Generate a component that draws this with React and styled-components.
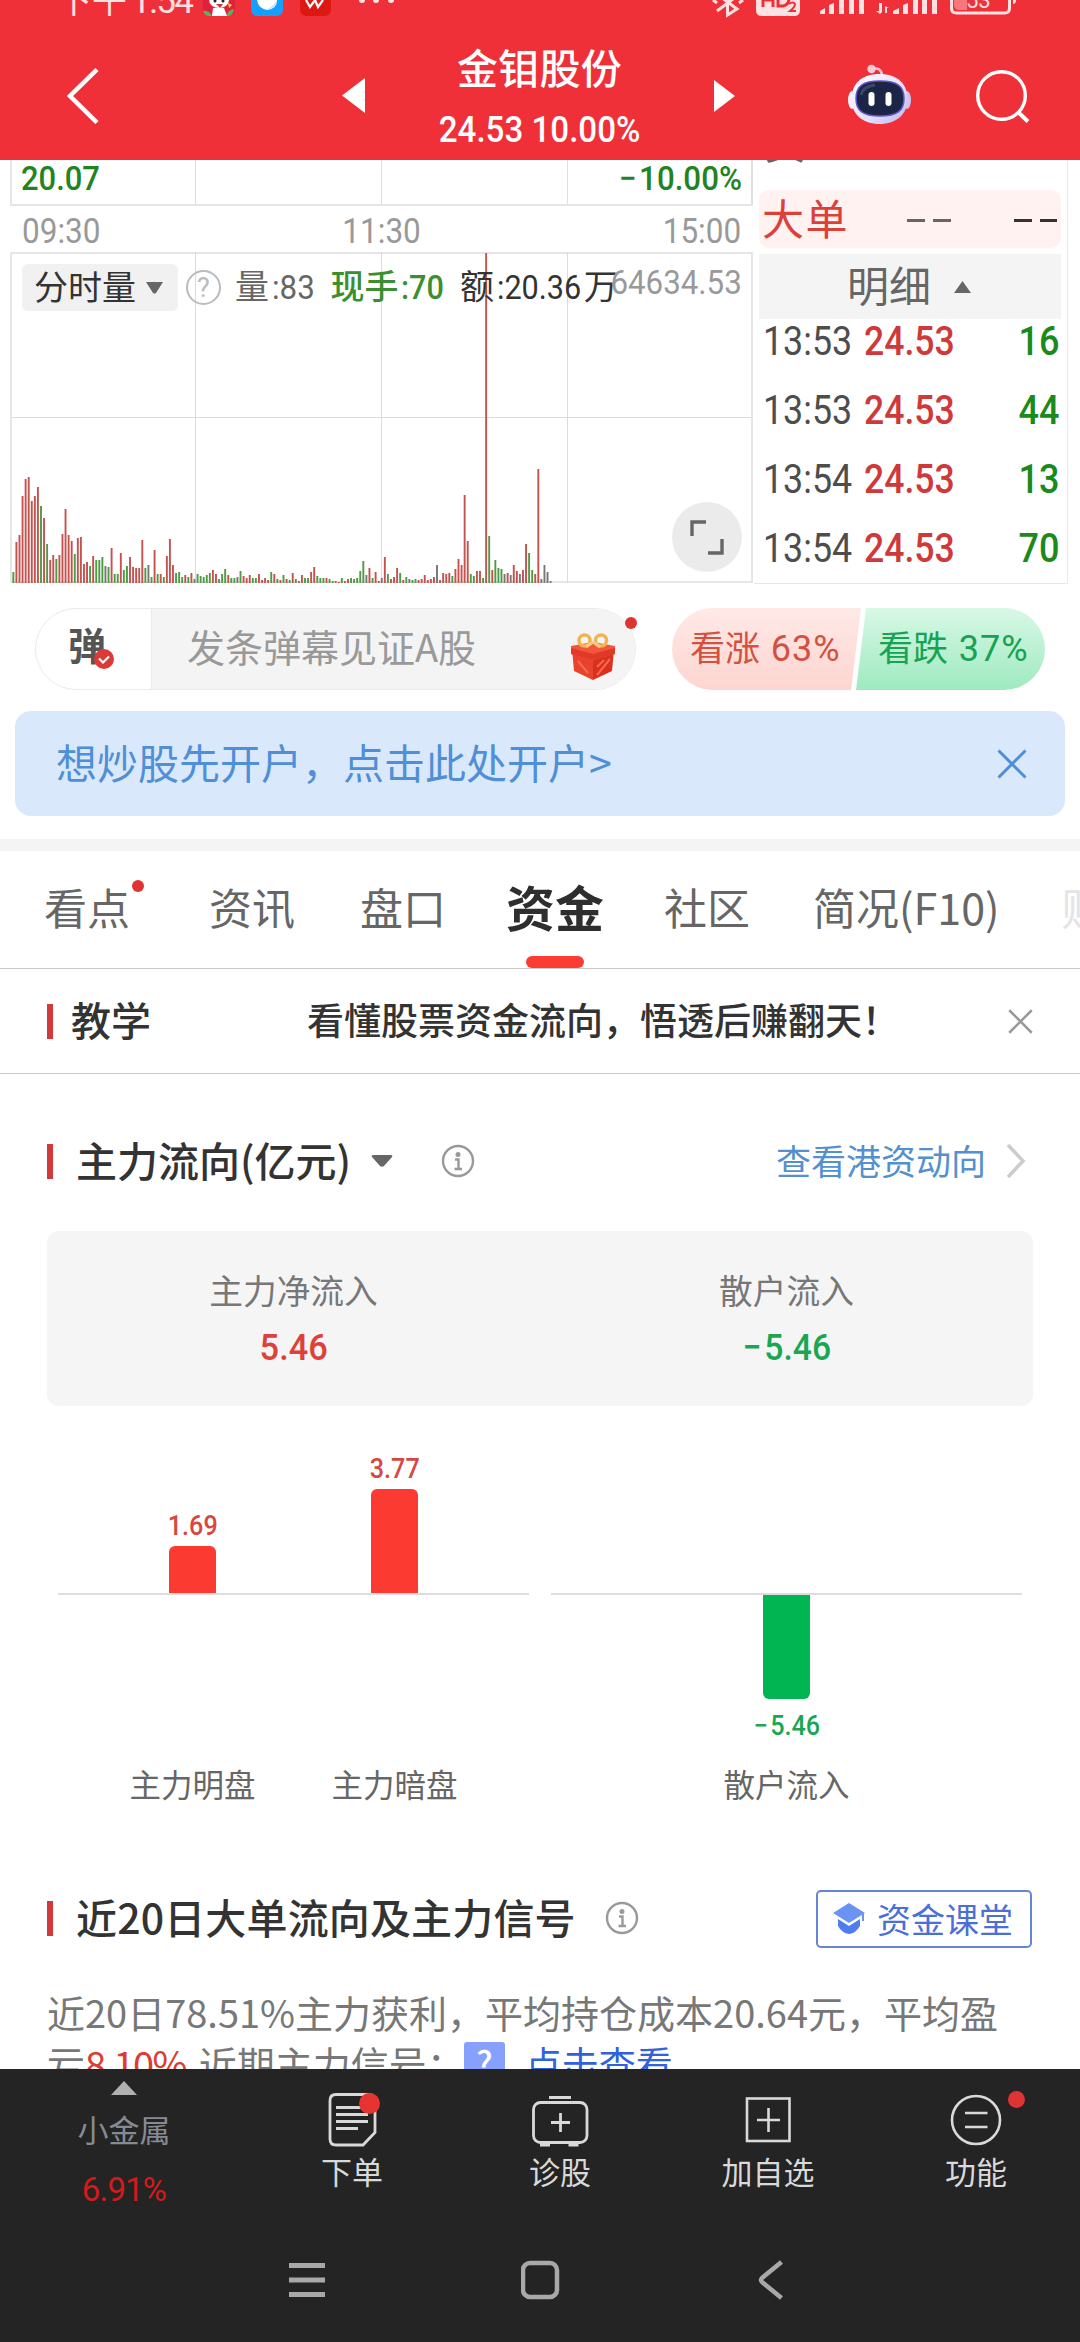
import React from 'react';
import styled, { createGlobalStyle } from 'styled-components';

const VOLUME =
  'g11 r41 r48 r87 r104 r106 r82 r87 r96 g77 r65 g39 r23 r28 g24 r28 r49 r74 r48 r42 g29 r45 r46 r19 r21 g17 r27 g23 g23 g26 k17 g16 r35 g9 g9 r30 g13 g17 r26 r16 ' +
  'r15 r15 r43 g15 k18 g6 r33 g9 r9 g6 r27 r44 r18 g10 g11 g6 r8 g6 r10 k4 g9 g7 g6 g8 g10 r13 r9 g4 g9 g14 r8 g5 g5 k6 g12 r7 r5 r8 g5 g5 ' +
  'r9 r3 r5 r3 g11 r9 g4 r3 g8 r4 g3 r10 g4 r2 r8 g5 g5 r11 r16 g7 g5 g5 r5 g4 g2 r2 r1 g5 r2 r4 g5 g4 g5 g12 g22 k8 r15 g5 r11 r2 ' +
  'k5 r26 g9 r4 r6 r15 g10 r3 g6 k4 g3 g4 r3 r4 r8 r3 r4 r6 k18 r3 r10 r9 r10 g7 r14 r24 r18 r88 r42 g9 g7 r12 r12 g5 r330 g47 r13 g23 g15 g14 ' +
  'k9 r10 k8 r18 r12 k9 r13 r39 g30 g13 r9 r114 k4 k18 k11 k2';

const volumeBars = VOLUME.split(' ').map((item) => ({
  kind: item[0],
  size: Number(item.slice(1))
}));

const barColors = { r: '#c4524f', g: '#4f9a45', k: '#777777' };

const trades = [
  { time: '13:53', price: '24.53', amount: '16' },
  { time: '13:53', price: '24.53', amount: '44' },
  { time: '13:54', price: '24.53', amount: '13' },
  { time: '13:54', price: '24.53', amount: '70' }
];

const tabs = [
  { name: '看点', left: 44, dot: true },
  { name: '资讯', left: 79 },
  { name: '盘口', left: 65 },
  { name: '资金', left: 60, active: true },
  { name: '社区', left: 60 },
  { name: '简况(F10)', left: 63 },
  { name: '财', left: 62, faded: true }
];

const StatusIcons = () => (
  <svg width='200' height='20' viewBox='202 0 200 20'>
    <path d='M202.500 0h32.500v9q0 7-7 7h-18.500q-7 0-7-7z' fill='#e0203c' />
    <path d='M203 11q6-1 9 5h-4q-4-1-5-5zM234 9q-6 1-8 7h3q4-1 5-7z' fill='#5fae62' />
    <ellipse cx='219' cy='0' rx='10' ry='8' fill='#fff' />
    <path d='M213 8h11l3 8h-15z' fill='#fff' />
    <circle cx='215' cy='1' r='1.500' fill='#222' />
    <circle cx='223' cy='1' r='1.500' fill='#222' />
    <path d='M216 4h7l-3 4z' fill='#c33' />
    <path d='M228 3l4 2-3 3z' fill='#ffd84a' />
    <path d='M251 0h32v9q0 7-7 7h-18q-7 0-7-7z' fill='#14a0ff' />
    <path d='M257 0h20q0 9-10 10q-9-2-10-10z' fill='#fff' />
    <path d='M266 10q10-1 11-10q-3 6-11 10z' fill='#bfe4fb' />
    <path d='M300 0h31v9q0 7-7 7h-17q-7 0-7-7z' fill='#dd1712' />
    <path d='M306 0l4 7l5-7l3 7l5-7' fill='none' stroke='#fff' strokeWidth='2.200' />
    <circle cx='362' cy='0' r='3' fill='#ffe3e3' />
    <circle cx='376' cy='0' r='3' fill='#ffe3e3' />
    <circle cx='391' cy='0' r='3' fill='#ffe3e3' />
  </svg>
);

const SignalIcons = () => (
  <svg width='310' height='20' viewBox='710 0 310 20'>
    <g fill='none' stroke='#ffe1e2' strokeWidth='3'>
      <path d='M717 11L737-4M717-6L737 9L727.500 15V-4' />
      <path d='M713 0l4 3M743 0l-4 3' />
    </g>
    <path d='M756 0h44v10q0 6-6 6h-32q-6 0-6-6z' fill='#ffe1e2' />
    <g fill='none' stroke='#ee3038' strokeWidth='3'>
      <path d='M763-6V7M773-6V7M763 0h10M778-6V6h5q6-1 6-8' />
    </g>
    <path d='M789 4q4-3 6 0q0 3-5 7h6' fill='none' stroke='#ee3038' strokeWidth='2' />
    <g fill='#ffe1e2'>
      <path d='M820 14v-3l5-3v6zM829 14v-9l5-2v11zM839 0h5v14h-5zM849 0h5v14h-5zM859 0h5v14h-5z' />
      <path d='M893 14v-3l6-3v6zM903 14v-9l5-2v11zM913 0h5v14h-5zM922 0h5v14h-5zM932 0h5v14h-5z' />
      <path d='M879 3v8h-3l4 3 2-2V3zM885 13V6l4 2h-2v5z' />
      <path d='M1013 0h3q0 4-3 4z' />
      <path d='M954 0h13v10h-9q-4-1-4-5z' opacity='.4' />
    </g>
    <path d='M951.500-4V8q0 5 5 5h48q5 0 5-5V-4' fill='none' stroke='#ffe1e2' strokeWidth='3' />
    <text x='966' y='8' fontSize='22' fontFamily='Roboto, sans-serif' fill='#ffe1e2'>
      53
    </text>
  </svg>
);

const Robot = () => (
  <svg width='64' height='62' viewBox='0 0 64 62'>
    <defs>
      <linearGradient id='shell' x1='0' y1='0' x2='1' y2='1'>
        <stop offset='0' stopColor='#ffffff' />
        <stop offset='.6' stopColor='#e6defa' />
        <stop offset='1' stopColor='#b9b4f0' />
      </linearGradient>
    </defs>
    <path d='M25 5q8-2 9 6' fill='none' stroke='#f9c3d4' strokeWidth='2.500' />
    <circle cx='23.500' cy='5' r='4.200' fill='#fbc8d4' />
    <ellipse cx='4' cy='36' rx='4' ry='9' fill='#f2eefc' />
    <ellipse cx='59' cy='36' rx='4' ry='9' fill='#c9c4f2' />
    <path d='M31.500 10c18 0 28 10 28 25S48.500 60 31.500 60S3.500 50 3.500 35S13.500 10 31.500 10z' fill='url(#shell)' />
    <path d='M32 17c17 0 24 5 24 17.500s-7 17.500-24 17.500S8 47 8 34.500s7-17.500 24-17.500z' fill='#1d2547' stroke='#5d55c8' strokeWidth='1.500' />
    <path d='M13 31q2-9 14-10' stroke='#3d4668' strokeWidth='3' fill='none' />
    <rect x='20.500' y='28' width='6' height='14' rx='3' fill='#fff' />
    <rect x='37.500' y='28' width='6' height='14' rx='3' fill='#fff' />
  </svg>
);

const VolumeChart = () => (
  <ChartSvg width='744' height='332' viewBox='10 252 744 332'>
    <g fill='#e6e6e6'>
      <rect x='10' y='252' width='743' height='2' />
      <rect x='10' y='417' width='743' height='1' fill='#dcdcdc' />
      <rect x='10' y='581' width='743' height='2' />
      <rect x='10' y='252' width='2' height='331' />
      <rect x='195' y='252' width='1' height='331' fill='#dcdcdc' />
      <rect x='381' y='252' width='1' height='331' fill='#dcdcdc' />
      <rect x='567' y='252' width='1' height='331' fill='#dcdcdc' />
      <rect x='751' y='252' width='2' height='331' />
    </g>
    {volumeBars.map((bar, i) => (
      <rect
        key={i}
        x={12.4 + i * 3.07}
        y={583 - bar.size}
        width='1.900'
        height={bar.size}
        fill={barColors[bar.kind]}
      />
    ))}
  </ChartSvg>
);

const Gift = () => (
  <svg width='46' height='48' viewBox='0 0 46 48'>
    <path d='M2 16L23 21V47L4 38z' fill='#e8432f' />
    <path d='M44 16L23 21V47L42 38z' fill='#d9301f' />
    <path d='M1 13L23 9L45 13V21L23 27L1 21z' fill='#f4553c' />
    <path d='M1 15L23 21L45 15V21L23 27L1 21z' fill='#df3a28' />
    <path d='M27 42L40 26M27 34L34 27M8 28L18 40' stroke='#f7694b' strokeWidth='2' />
    <circle cx='14.500' cy='7.500' r='5.500' fill='none' stroke='#f0b455' strokeWidth='3.500' />
    <circle cx='31' cy='7.500' r='5.500' fill='none' stroke='#f0b455' strokeWidth='3.500' />
    <path d='M23 9l-7 5M23 9l7 5' stroke='#f6cd7c' strokeWidth='3' />
  </svg>
);

const Info = () => (
  <svg width='34' height='34' viewBox='0 0 34 34' fill='none' stroke='#999'>
    <circle cx='17' cy='17' r='15' strokeWidth='2.400' />
    <circle cx='17' cy='10.500' r='2.500' fill='#999' stroke='none' />
    <path d='M14 15.500h3.500v9M13.500 25h7.500' strokeWidth='2.400' />
  </svg>
);

const Cross = ({ size, color, stroke }) => (
  <svg width={size} height={size} viewBox='0 0 30 30'>
    <path d='M1.500 1.500L28.500 28.500M28.500 1.500L1.500 28.500' stroke={color} strokeWidth={stroke} />
  </svg>
);

const OrderIcon = () => (
  <svg width='60' height='60' viewBox='322 2090 60 60' fill='none' stroke='#d9d9d9' strokeWidth='2.800'>
    <path d='M336 2094.500h32q7 0 7 7v31l-12 12.500h-27q-6 0-6-6v-38.500q0-6 6-6z' />
    <path d='M336 2107.500h32M336 2114.500h32M336 2121.500h32M336 2128.500h22' />
    <circle cx='369.500' cy='2103.500' r='10.500' fill='#e83333' stroke='none' />
  </svg>
);

const DiagnoseIcon = () => (
  <svg width='60' height='60' viewBox='530 2090 60 60' fill='none' stroke='#d9d9d9' strokeWidth='2.800'>
    <rect x='533.500' y='2102.500' width='53.500' height='40' rx='7' />
    <path d='M549 2097.500h22M540 2145h10M568.500 2145h10M551 2122.500h19M560.500 2113v19' />
  </svg>
);

const AddIcon = () => (
  <svg width='60' height='60' viewBox='738 2090 60 60' fill='none' stroke='#d9d9d9' strokeWidth='2.600'>
    <rect x='747' y='2098.500' width='42.500' height='42.500' />
    <path d='M757 2120h23M768.500 2108v24' />
  </svg>
);

const MoreIcon = () => (
  <svg width='60' height='60' viewBox='946 2090 60 60' fill='none' stroke='#d9d9d9' strokeWidth='2.600'>
    <circle cx='976' cy='2120' r='24' />
    <path d='M965 2113h22.500M965 2127h22.500' />
  </svg>
);

const App = () => {
  return (
    <Screen>
      <GlobalStyle />
      <Header>
        <StatusBar>
          <Clock>
            下午<ClockTime>1:54</ClockTime>
          </Clock>
          <StatusIcons />
          <SignalIcons />
        </StatusBar>
        <TopBar>
          <BackCell>
            <svg width='32' height='56' viewBox='0 0 32 56'>
              <path d='M30 1.500L3 28L30 54.500' fill='none' stroke='#fff' strokeWidth='4.500' />
            </svg>
          </BackCell>
          <svg width='23' height='35' viewBox='0 0 23 35'>
            <path d='M0 17.500L23 0V35z' fill='#fff' />
          </svg>
          <StockTitle>
            <StockName>金钼股份</StockName>
            <Num $size={36} $line={56} $color='#fff' $origin='center' $weight={500} $scale={0.92}>
              24.53 10.00%
            </Num>
          </StockTitle>
          <svg width='21' height='32' viewBox='0 0 21 32'>
            <path d='M21 16L0 0V32z' fill='#fff' />
          </svg>
          <RobotCell>
            <Robot />
          </RobotCell>
          <SearchCell>
            <svg width='56' height='56' viewBox='0 0 56 56' fill='none' stroke='#fff' strokeWidth='3.400'>
              <circle cx='25.500' cy='27.500' r='23.800' />
              <path d='M42.500 44.500L52 53.500' strokeWidth='4' />
            </svg>
          </SearchCell>
        </TopBar>
      </Header>

      <Market>
        <Minute>
          <PriceTail>
            <TailCell>
              <Num $size={34} $line={37} $color='#218321' $weight={500} $scale={0.91}>
                20.07
              </Num>
            </TailCell>
            <TailCell />
            <TailCell />
            <TailCell $end>
              <Num $size={34} $line={37} $color='#218321' $origin='right' $weight={500} $scale={0.92}>
                <Minus>−</Minus>10.00%
              </Num>
            </TailCell>
          </PriceTail>
          <Times>
            <Num $size={35} $color='#999'>09:30</Num>
            <Num $size={35} $color='#999' $origin='center'>11:30</Num>
            <Num $size={35} $color='#999' $origin='right'>15:00</Num>
          </Times>
          <VolumePanel>
            <VolumeChart />
            <Legend>
              <Chip>
                分时量
                <svg width='17' height='12' viewBox='0 0 17 12'>
                  <path d='M0 0H17L10 11Q8.500 12 7 11z' fill='#666' />
                </svg>
              </Chip>
              <Help>?</Help>
              <Stat $left={14} $color='#666'>
                量<Num $size={34} $color='inherit' $scale={0.92}>:83</Num>
              </Stat>
              <Stat $left={12} $color='#3b8f2f' $weight={500}>
                现手<Num $size={34} $color='inherit' $weight={500}>:70</Num>
              </Stat>
              <Stat $left={11} $color='#333'>
                额<Num $size={34} $color='inherit'>:20.36</Num>
                <Unit>万</Unit>
              </Stat>
            </Legend>
            <MaxVolume>
              <Num $size={34} $line={41} $color='#999' $origin='right' $scale={0.92}>
                64634.53
              </Num>
            </MaxVolume>
            <Expand>
              <svg width='36' height='36' viewBox='0 0 36 36' fill='none' stroke='#666' strokeWidth='3.400'>
                <path d='M3 17V3H17M19 34H33V20' />
              </svg>
            </Expand>
          </VolumePanel>
        </Minute>
        <Quotes>
          <CutRow>
            <span>卖</span>
          </CutRow>
          <BigOrder>
            大单
            <Dashes $color='#666' />
            <Dashes $color='#333' />
          </BigOrder>
          <DetailHead>
            明细
            <svg width='17' height='12' viewBox='0 0 17 12'>
              <path d='M0 12H17L8.500 0z' fill='#666' />
            </svg>
          </DetailHead>
          {trades.map((trade, i) => (
            <TradeRow key={i}>
              <Num $size={40} $color='#4d4d4d' $scale={0.895}>{trade.time}</Num>
              <Num $size={40} $color='#d0393a' $weight={500} $scale={0.89}>{trade.price}</Num>
              <Num $size={40} $color='#1a8a1a' $weight={500} $origin='right'>{trade.amount}</Num>
            </TradeRow>
          ))}
        </Quotes>
      </Market>

      <CommentRow>
        <CommentBox>
          <Toggle>
            弹
            <ToggleMark>
              <svg width='20' height='20' viewBox='0 0 20 20'>
                <circle cx='10' cy='10' r='10' fill='#dc3a36' />
                <path d='M5 9.500l4 4l6-6' fill='none' stroke='#fff' strokeWidth='2.200' />
              </svg>
            </ToggleMark>
          </Toggle>
          <Placeholder>
            <span>发条弹幕见证A股</span>
            <Gift />
          </Placeholder>
          <RedDot $size={12} $top={8} $left={589} />
        </CommentBox>
        <Vote>
          <Bull>
            看涨 <Percent>63%</Percent>
          </Bull>
          <Bear>
            看跌 <Percent>37%</Percent>
          </Bear>
        </Vote>
      </CommentRow>

      <Banner>
        <span>想炒股先开户，点击此处开户&gt;</span>
        <Cross size={30} color='#4f8fd8' stroke={3} />
      </Banner>

      <Tabs>
        {tabs.map((tab) => (
          <Tab key={tab.name} $left={tab.left} $active={tab.active} $faded={tab.faded}>
            {tab.name}
            {tab.dot && <RedDot $size={12} $top={29} $left={88} />}
            {tab.active && <Underline />}
          </Tab>
        ))}
      </Tabs>

      <Lesson>
        <Mark />
        <LessonTag>教学</LessonTag>
        <LessonText>看懂股票资金流向，悟透后赚翻天！</LessonText>
        <Cross size={25} color='#999' stroke={3} />
      </Lesson>

      <SectionHead>
        <Mark />
        <SectionTitle>主力流向(亿元)</SectionTitle>
        <Caret width='22' height='12' viewBox='0 0 22 12'>
          <path d='M2 0H20Q22 .5 21 2L13 11Q11 12.500 9 11L1 2Q0 .5 2 0z' fill='#666' />
        </Caret>
        <Info />
        <MoreLink>
          <span>查看港资动向</span>
          <svg width='20' height='36' viewBox='0 0 20 36'>
            <path d='M2 2L17 18L2 34' fill='none' stroke='#ccc' strokeWidth='3.500' />
          </svg>
        </MoreLink>
      </SectionHead>

      <Summary>
        <SummaryItem>
          主力净流入
          <Num $size={37} $line={40} $color='#df4039' $weight={500} $origin='center' $scale={0.93}>
            5.46
          </Num>
        </SummaryItem>
        <SummaryItem>
          散户流入
          <Num $size={37} $line={40} $color='#1aa653' $weight={500} $origin='center' $scale={0.91}>
            <Minus>−</Minus>5.46
          </Num>
        </SummaryItem>
      </Summary>

      <FlowCharts>
        <FlowChart>
          <FlowColumn>
            <Upper>
              <FlowValue $color='#d8463f'>1.69</FlowValue>
              <Bar $up style={{ height: 47 }} />
            </Upper>
            <Lower />
            <FlowLabel>主力明盘</FlowLabel>
          </FlowColumn>
          <FlowColumn>
            <Upper>
              <FlowValue $color='#d8463f'>3.77</FlowValue>
              <Bar $up style={{ height: 104 }} />
            </Upper>
            <Lower />
            <FlowLabel>主力暗盘</FlowLabel>
          </FlowColumn>
        </FlowChart>
        <FlowChart>
          <FlowColumn>
            <Upper />
            <Lower>
              <Bar style={{ height: 104 }} />
              <FlowValue $color='#1aa653'>
                <Minus>−</Minus>5.46
              </FlowValue>
            </Lower>
            <FlowLabel>散户流入</FlowLabel>
          </FlowColumn>
        </FlowChart>
      </FlowCharts>

      <SignalHead>
        <Mark />
        <SectionTitle $wide>近20日大单流向及主力信号</SectionTitle>
        <InfoGap />
        <Info />
        <ClassButton>
          <svg width='34' height='32' viewBox='0 0 34 32'>
            <path d='M17 0L33 10L17 20L1 10z' fill='#6b93f3' />
            <path d='M6 16L17 23L28 16V23Q24 30 17 31Q10 30 6 23z' fill='#4f7df0' />
            <path d='M31 10V18' stroke='#6b93f3' strokeWidth='2' />
          </svg>
          资金课堂
        </ClassButton>
      </SignalHead>

      <Report>
        近20日78.51%主力获利，平均持仓成本20.64元，平均盈
        <ReportLine>
          亏<Loss>8.10%</Loss>近期主力信号：
          <Question>?</Question>
          <ViewLink>点击查看</ViewLink>
        </ReportLine>
      </Report>

      <BottomBar>
        <Sector>
          <svg width='26' height='14' viewBox='0 0 26 14'>
            <path d='M0 14H26L13 0z' fill='#b0b0b0' />
          </svg>
          <SectorName>小金属</SectorName>
          <SectorRate>6.91%</SectorRate>
        </Sector>
        <Action>
          <OrderIcon />
          下单
        </Action>
        <Action>
          <DiagnoseIcon />
          诊股
        </Action>
        <Action>
          <AddIcon />
          加自选
        </Action>
        <Action>
          <MoreIcon />
          功能
          <RedDot $size={17} $top={22} $left={136} />
        </Action>
      </BottomBar>

      <SystemNav>
        <svg width='36' height='40' viewBox='0 0 36 40'>
          <path d='M0 5.500H36M0 20H36M0 34.500H36' stroke='#a8a8a8' strokeWidth='5' />
        </svg>
        <svg width='40' height='40' viewBox='0 0 40 40'>
          <rect x='2' y='3' width='34' height='34' rx='7' fill='none' stroke='#a8a8a8' strokeWidth='4.500' />
        </svg>
        <svg width='26' height='40' viewBox='0 0 26 40'>
          <path d='M24.500 2L5 18Q3 20 5 22L24.500 38' fill='none' stroke='#a8a8a8' strokeWidth='4.500' />
        </svg>
      </SystemNav>
    </Screen>
  );
};

export default App;

const GlobalStyle = createGlobalStyle`
  * {
    box-sizing: border-box;
  }
  body {
    margin: 0;
    background: #fff;
  }
  svg {
    display: block;
    flex-shrink: 0;
  }
`;

const Screen = styled.div`
  display: flex;
  flex-direction: column;
  width: 1080px;
  height: 2342px;
  overflow: hidden;
  background: #fff;
  font-family: 'Noto Sans CJK SC', sans-serif;
  color: #333;
  white-space: nowrap;
`;

// narrow figures used for every quote
const Num = styled.span`
  display: inline-block;
  font-family: Roboto, 'Noto Sans CJK SC', sans-serif;
  font-size: ${(p) => p.$size}px;
  font-weight: ${(p) => p.$weight || 400};
  line-height: ${(p) => (p.$line ? `${p.$line}px` : 'inherit')};
  color: ${(p) => p.$color};
  transform: scaleX(${(p) => p.$scale || 0.9});
  transform-origin: ${(p) => p.$origin || 'left'};
`;

const Minus = styled.span`
  margin-right: 0.09em;
`;

const RedDot = styled.i`
  position: absolute;
  top: ${(p) => p.$top}px;
  left: ${(p) => p.$left}px;
  width: ${(p) => p.$size}px;
  height: ${(p) => p.$size}px;
  border-radius: 50%;
  background: #df3434;
`;

const Header = styled.header`
  height: 160px;
  flex-shrink: 0;
  background: #f03038;
  color: #fff;
`;

const StatusBar = styled.div`
  display: flex;
  height: 20px;
  padding-left: 57px;
  > :nth-child(3) {
    margin-left: 308px;
  }
`;

const Clock = styled.div`
  width: 145px;
  margin-top: -12px;
  font-size: 35px;
  line-height: 20px;
  color: #ffe1e2;
`;

const ClockTime = styled.span`
  margin-left: 4px;
  font-family: Roboto, sans-serif;
  letter-spacing: -1.5px;
`;

const TopBar = styled.div`
  display: grid;
  grid-template-columns: 342px 23px 349px 21px 177px 168px;
  align-items: center;
  height: 140px;
  padding-top: 11px;
`;

const BackCell = styled.div`
  padding-left: 67px;
`;

const StockTitle = styled.div`
  display: flex;
  flex-direction: column;
  align-items: center;
  align-self: start;
  gap: 6px;
  padding-top: 5px;
`;

const StockName = styled.div`
  font-size: 41px;
  font-weight: 500;
  letter-spacing: 0.3px;
  line-height: 60px;
`;

const RobotCell = styled.div`
  display: flex;
  justify-content: flex-end;
  padding-bottom: 2px;
`;

const SearchCell = styled.div`
  padding-left: 64px;
`;

const Market = styled.section`
  display: grid;
  grid-template-columns: 744px 316px;
  height: 424px;
  padding-left: 10px;
  flex-shrink: 0;
`;

const Minute = styled.div`
  display: flex;
  flex-direction: column;
`;

const PriceTail = styled.div`
  display: grid;
  grid-template-columns: 184px 186px 186px 185px;
  width: 743px;
  height: 46px;
  border-bottom: 2px solid #e6e6e6;
  border-left: 2px solid #e6e6e6;
`;

const TailCell = styled.div`
  display: flex;
  justify-content: ${(p) => (p.$end ? 'flex-end' : 'flex-start')};
  padding: 0 9px;
  border-right: ${(p) => (p.$end ? 2 : 1)}px solid #dfdfdf;
`;

const Times = styled.div`
  display: flex;
  justify-content: space-between;
  height: 46px;
  padding: 0 13px 0 12px;
  line-height: 51px;
`;

const VolumePanel = styled.div`
  position: relative;
  height: 332px;
  padding: 12px 0 0 12px;
`;

const ChartSvg = styled.svg`
  position: absolute;
  top: 0;
  left: 0;
`;

const Legend = styled.div`
  position: relative;
  display: flex;
  align-items: center;
  height: 47px;
  font-size: 34px;
  line-height: 47px;
`;

const Chip = styled.div`
  display: flex;
  align-items: center;
  gap: 10px;
  width: 156px;
  height: 47px;
  padding-left: 12px;
  padding-bottom: 4px;
  border-radius: 6px;
  background: #f1f1f1;
  > svg {
    margin-top: 4px;
  }
`;

const Help = styled.div`
  width: 35px;
  height: 35px;
  margin-left: 8px;
  border: 2px solid #bbb;
  border-radius: 50%;
  font-family: Roboto, sans-serif;
  font-size: 27px;
  line-height: 32px;
  text-align: center;
  color: #bbb;
`;

const Stat = styled.div`
  display: flex;
  margin-left: ${(p) => p.$left}px;
  margin-top: -4px;
  font-weight: ${(p) => p.$weight || 400};
  color: ${(p) => p.$color};
  > span:first-child {
    margin: 3px 0 0 3px;
  }
`;

const Unit = styled.span`
  margin-left: -7px;
`;

const MaxVolume = styled.div`
  position: absolute;
  top: 10px;
  right: 12px;
`;

const Expand = styled.div`
  position: absolute;
  right: 12px;
  bottom: 12px;
  display: flex;
  align-items: center;
  justify-content: center;
  width: 70px;
  height: 70px;
  border-radius: 50%;
  background: #ebebeb;
`;

const Quotes = styled.div`
  width: 314px;
  padding: 0 6px 0 5px;
  border-right: 1px solid #e8e8e8;
  border-bottom: 1px solid #e8e8e8;
`;

// row scrolled under the header
const CutRow = styled.div`
  height: 30px;
  padding-left: 5px;
  overflow: hidden;
  font-size: 41px;
  line-height: 20px;
  color: #666;
  > span {
    display: block;
    margin-top: -29px;
  }
`;

const BigOrder = styled.div`
  display: flex;
  align-items: center;
  height: 58px;
  padding: 0 4px 4px 3px;
  border-radius: 10px;
  background: #fff2f1;
  font-size: 42px;
  letter-spacing: 1.5px;
  line-height: 54px;
  color: #dd4039;
`;

const Dashes = styled.i`
  width: 44px;
  height: 3px;
  margin: 6px 0 0 58px;
  background: linear-gradient(to right, ${(p) => p.$color} 18px, transparent 18px 26px, ${(p) => p.$color} 26px);
  & + & {
    margin-left: 63px;
  }
`;

const DetailHead = styled.div`
  display: flex;
  align-items: center;
  gap: 23px;
  height: 65px;
  margin: 6px 0 -12px;
  padding: 0 0 5px 88px;
  background: #f4f4f4;
  font-size: 42px;
  line-height: 60px;
  color: #666;
  > svg {
    margin-top: 5px;
  }
`;

const TradeRow = styled.div`
  display: flex;
  height: 69px;
  padding: 0 2px 0 4px;
  line-height: 70px;
  > :nth-child(2) {
    margin-left: 1px;
  }
  > :last-child {
    margin-left: auto;
  }
`;

const CommentRow = styled.div`
  display: flex;
  gap: 36px;
  height: 127px;
  flex-shrink: 0;
  padding: 24px 35px 0 35px;
`;

const CommentBox = styled.div`
  position: relative;
  display: flex;
  width: 602px;
  height: 82px;
  border: 1px solid #ebebeb;
  border-radius: 41px;
`;

const Toggle = styled.div`
  position: relative;
  width: 116px;
  padding-left: 32px;
  border-right: 1px solid #ebebeb;
  font-size: 38px;
  font-weight: 700;
  line-height: 70px;
  color: #555;
`;

const ToggleMark = styled.span`
  position: absolute;
  left: 58px;
  top: 40px;
`;

const Placeholder = styled.div`
  display: flex;
  flex: 1;
  align-items: center;
  justify-content: space-between;
  padding: 0 19px 0 35px;
  border-radius: 0 41px 41px 0;
  background: #f4f4f4;
  font-size: 38px;
  line-height: 76px;
  color: #999;
  > span {
    margin-top: -6px;
  }
  > svg {
    margin-top: 16px;
  }
`;

const Vote = styled.div`
  display: flex;
  width: 373px;
  height: 82px;
  font-family: Roboto, 'Noto Sans CJK SC', sans-serif;
  font-size: 35px;
  line-height: 82px;
`;

const Percent = styled.span`
  margin-left: 2px;
  font-size: 36px;
  letter-spacing: 1px;
`;

const Bull = styled.div`
  width: 189px;
  padding-left: 18px;
  border-radius: 41px 0 0 41px;
  background: linear-gradient(#ffe9e7, #fdd5d0);
  clip-path: polygon(0 0, 100% 0, calc(100% - 10px) 100%, 0 100%);
  color: #d4503f;
`;

const Bear = styled.div`
  width: 189px;
  margin-left: -5px;
  padding-left: 22px;
  border-radius: 0 41px 41px 0;
  background: linear-gradient(#d8f8e6, #9eeabf);
  clip-path: polygon(10px 0, 100% 0, 100% 100%, 0 100%);
  color: #17a254;
`;

const Banner = styled.div`
  display: flex;
  align-items: center;
  justify-content: space-between;
  height: 105px;
  flex-shrink: 0;
  margin: 0 15px;
  padding: 0 38px 0 41px;
  border-radius: 16px;
  background: #dae8fb;
  font-size: 41px;
  line-height: 100px;
  color: #4f8fd8;
  > span {
    margin-top: -5px;
  }
`;

const Tabs = styled.nav`
  display: flex;
  height: 130px;
  flex-shrink: 0;
  margin-top: 23px;
  border-top: 12px solid #f4f4f4;
  border-bottom: 1px solid #c8c8c8;
`;

const Tab = styled.div`
  position: relative;
  margin-left: ${(p) => p.$left}px;
  font-size: ${(p) => (p.$active ? 49 : 43)}px;
  font-weight: ${(p) => (p.$active ? 700 : 400)};
  line-height: ${(p) => (p.$active ? 109 : 111)}px;
  color: ${(p) => (p.$active ? '#2e2e2e' : p.$faded ? '#e4e4e4' : '#666')};
`;

const Underline = styled.i`
  position: absolute;
  left: 50%;
  bottom: 0;
  width: 58px;
  height: 12px;
  margin-left: -29px;
  border-radius: 6px;
  background: #fa3c32;
`;

const Mark = styled.i`
  width: 6px;
  height: 35px;
  background: #d2393a;
`;

const Lesson = styled.div`
  display: flex;
  align-items: center;
  height: 105px;
  flex-shrink: 0;
  padding: 0 47px;
  border-bottom: 1px solid #c8c8c8;
  font-weight: 500;
  > svg {
    margin-left: auto;
  }
`;

const LessonTag = styled.div`
  margin: -5px 0 0 18px;
  font-size: 40px;
`;

const LessonText = styled.div`
  margin: -5px 0 0 156px;
  font-size: 37px;
`;

const SectionHead = styled.div`
  display: flex;
  align-items: center;
  height: 60px;
  flex-shrink: 0;
  margin-top: 57px;
  padding: 0 54px 0 47px;
`;

const SectionTitle = styled.div`
  margin: -5px 0 0 23px;
  font-size: 41px;
  font-weight: 500;
  letter-spacing: ${(p) => (p.$wide ? 0.15 : 0)}px;
  line-height: 60px;
`;

const Caret = styled.svg`
  margin: 0 48px 0 20px;
`;

const MoreLink = styled.div`
  display: flex;
  align-items: center;
  gap: 20px;
  margin-left: auto;
  font-size: 35px;
  line-height: 58px;
  color: #5490d0;
  > span {
    margin-top: -3px;
  }
`;

const Summary = styled.div`
  display: flex;
  height: 175px;
  flex-shrink: 0;
  margin: 40px 47px 0;
  border-radius: 12px;
  background: #f5f5f5;
`;

const SummaryItem = styled.div`
  display: flex;
  flex: 1;
  flex-direction: column;
  align-items: center;
  padding-top: 35px;
  font-size: 33.700px;
  line-height: 48px;
  color: #777;
  > span {
    margin-top: 14px;
  }
`;

const FlowCharts = styled.div`
  display: flex;
  justify-content: space-between;
  height: 415px;
  flex-shrink: 0;
  padding: 0 58px;
`;

const FlowChart = styled.div`
  display: flex;
  justify-content: center;
  width: 471px;
  background: linear-gradient(#ddd, #ddd) 0 187px / 100% 2px no-repeat;
`;

const FlowColumn = styled.div`
  display: flex;
  flex-direction: column;
  align-items: center;
  width: 202px;
`;

const Upper = styled.div`
  display: flex;
  flex-direction: column;
  align-items: center;
  justify-content: flex-end;
  height: 187px;
  margin-bottom: 2px;
`;

const Lower = styled.div`
  display: flex;
  flex-direction: column;
  align-items: center;
  height: 168px;
`;

const Bar = styled.div`
  width: 47px;
  border-radius: ${(p) => (p.$up ? '6px 6px 0 0' : '0 0 6px 6px')};
  background: ${(p) => (p.$up ? '#fb3b31' : '#00b552')};
`;

const FlowValue = styled(Num).attrs({ $size: 28, $weight: 500, $origin: 'center', $line: 40 })`
  margin-top: 7px;
`;

const FlowLabel = styled.div`
  font-size: 31.500px;
  line-height: 40px;
  color: #666;
`;

const SignalHead = styled(SectionHead)`
  margin-top: 67px;
  padding-right: 48px;
`;

const InfoGap = styled.i`
  width: 29px;
`;

const ClassButton = styled.div`
  display: flex;
  align-items: center;
  gap: 11px;
  width: 216px;
  height: 58px;
  margin: 2px 0 0 auto;
  padding-left: 14px;
  border: 2px solid #6485d6;
  border-radius: 5px;
  font-size: 34px;
  line-height: 50px;
  color: #4a70d8;
`;

const Report = styled.div`
  height: 121px;
  flex-shrink: 0;
  padding: 38px 0 0 47px;
  overflow: hidden;
  font-size: 38px;
  line-height: 52px;
  color: #777;
`;

const ReportLine = styled.div`
  display: flex;
  margin-top: -1px;
`;

const Loss = styled.span`
  margin-right: 13px;
  letter-spacing: -1.6px;
  color: #dc3c34;
`;

const Question = styled.span`
  width: 41px;
  height: 41px;
  margin: 5px 0 0 -1px;
  border-radius: 3px;
  background: #86a0fb;
  font-size: 34px;
  font-weight: 500;
  line-height: 40px;
  text-align: center;
  color: #fff;
`;

const ViewLink = styled.span`
  margin-left: 20px;
  font-size: 37px;
  color: #2f62dc;
`;

const BottomBar = styled.footer`
  display: grid;
  grid-template-columns: 248px repeat(4, 208px);
  height: 151px;
  flex-shrink: 0;
  background: #242424;
`;

const Sector = styled.div`
  display: flex;
  flex-direction: column;
  align-items: center;
  padding-top: 12px;
`;

const SectorName = styled.div`
  margin-top: 14px;
  font-size: 31px;
  line-height: 40px;
  color: #868b93;
`;

const SectorRate = styled.div`
  margin-top: 21px;
  font-family: Roboto, sans-serif;
  font-size: 33px;
  letter-spacing: -0.8px;
  line-height: 40px;
  color: #d01c1c;
`;

const Action = styled.div`
  position: relative;
  display: flex;
  flex-direction: column;
  align-items: center;
  padding-top: 21px;
  font-size: 31px;
  line-height: 42px;
  color: #d9d9d9;
`;

const SystemNav = styled.div`
  display: flex;
  flex: 1;
  gap: 196px;
  padding: 40px 0 0 289px;
  background: #242424;
`;
